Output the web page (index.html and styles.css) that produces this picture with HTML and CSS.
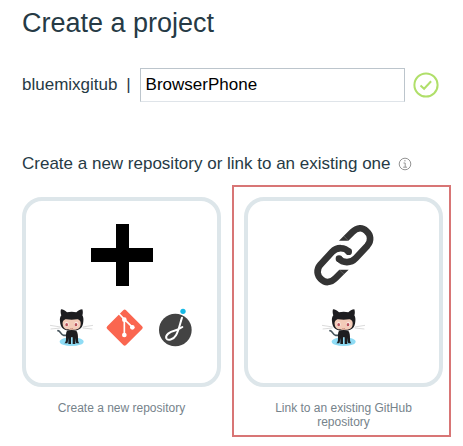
FILE: index.html
```html
<!DOCTYPE html>
<html lang="en">
<head>
  <meta charset="utf-8">
  <title>Create a project</title>
  <link rel="stylesheet" href="styles.css">
</head>
<body>
  <svg class="symbols" aria-hidden="true">
    <symbol id="octocat" viewBox="18 24 132 120">
      <ellipse cx="83" cy="125" rx="36" ry="13" fill="#8fdcf5"/>
      <path d="M18 76l32 5M20 87l30-3M116 81l31-5M116 84l29 3" fill="none" stroke="#c9c9c9" stroke-width="2"/>
      <path d="M42 92c8 0 8 13 17 14h14" fill="none" stroke="#46545c" stroke-width="5" stroke-linecap="round"/>
      <path d="M69 92h28c5 7 5 14 5 24 0 8 1 10 4 14h-9c-2-4-2-10-3-16v18h-8v-20h-5v20h-8v-18c-1 6-1 12-3 16h-9c4-4 5-8 5-14 0-10-1-17 3-24z" fill="#1d1d20"/>
      <path d="M51 28c7 0 14 5 18 9 9-2 19-2 28 0 4-4 11-9 18-9 2 6 2 13 0 18 3 5 4 11 3 18-1 20-11 29-35 29S49 84 48 64c-1-7 0-13 4-18-2-5-3-12-1-18z" fill="#1d1d20"/>
      <path d="M67 58c10 2 22 2 32 0 8 0 12 7 11 15-1 13-10 17-27 17s-26-4-27-17c-1-8 3-15 11-15z" fill="#f3cbb8"/>
      <ellipse cx="68" cy="73" rx="6" ry="8" fill="#fbe9e2"/>
      <ellipse cx="97" cy="73" rx="6" ry="8" fill="#fbe9e2"/>
      <ellipse cx="68" cy="74" rx="4" ry="5" fill="#b9535d"/>
      <ellipse cx="96" cy="74" rx="4" ry="5" fill="#b9535d"/>
      <path d="M79 86q4 2 8 0" fill="none" stroke="#a85f50" stroke-width="2"/>
    </symbol>
  </svg>

  <main class="page">
    <h1>Create a project</h1>

    <form class="name-row">
      <label for="project-name">bluemixgitub <span class="divider">|</span></label>
      <input type="text" id="project-name" value="BrowserPhone">
      <svg class="valid-icon" viewBox="0 0 26 26" role="img" aria-label="Valid name">
        <circle cx="13" cy="13" r="11.6"/>
        <path d="M7.5 13.5l3.6 3.3 7-7.5"/>
      </svg>
    </form>

    <h2>Create a new repository or link to an existing one
      <svg class="info-icon" viewBox="0 0 14 14" role="img" aria-label="More information">
        <circle cx="7" cy="7" r="5.8"/>
        <path d="M5.5 6h1.7v4M5.2 10.2h3.8M6.2 3.8h1.4"/>
      </svg>
    </h2>

    <div class="options">
      <button type="button" class="option">
        <span class="card">
          <svg class="main-icon" viewBox="0 0 62 62" aria-hidden="true">
            <path d="M25 0h13v24h24v14H38v24H25V38H0V24h25z" fill="#000"/>
          </svg>
          <span class="logos">
            <svg class="logo" viewBox="18 24 132 120" aria-hidden="true"><use href="#octocat" x="18" y="24" width="132" height="120"/></svg>
            <svg class="logo" viewBox="12 24 132 120" aria-hidden="true">
              <rect x="34" y="43" width="80" height="80" rx="6" transform="rotate(45 74 83)" fill="#fa6650"/>
              <path d="M55 39l18 19v46M73 58l25 24" fill="none" stroke="#fff" stroke-width="5"/>
              <circle cx="73" cy="59" r="7" fill="#fff"/>
              <circle cx="97" cy="82" r="7" fill="#fff"/>
              <circle cx="73" cy="105" r="7" fill="#fff"/>
            </svg>
            <svg class="logo logo-narrow" viewBox="177 24 105 120" aria-hidden="true">
              <circle cx="229" cy="90" r="49" fill="#434343"/>
              <path d="M249 53c-6 18-9 37-18 53-8 14-25 17-29 9-4-10 11-20 24-23 9-2 17-6 24-11" fill="none" stroke="#fff" stroke-width="6" stroke-linecap="round"/>
              <circle cx="252" cy="34" r="10" fill="#fff"/>
              <circle cx="252" cy="34" r="8" fill="#16b9e5"/>
            </svg>
          </span>
        </span>
        <span class="caption">Create a new repository</span>
      </button>

      <button type="button" class="option selected">
        <span class="card">
          <svg class="main-icon" viewBox="39 30 186 186" aria-hidden="true">
            <g fill="none" stroke="#343434" stroke-width="20">
              <path d="M138 73L156 55C172 39 188 40 199 51C212 62 215 80 202 95L167 133C152 149 128 147 117 134"/>
              <path d="M125 174L107 192C91 208 75 207 64 196C51 185 48 167 61 152L96 114C111 98 135 100 146 113"/>
            </g>
            <g fill="#343434">
              <circle cx="117" cy="134" r="10"/>
              <circle cx="146" cy="113" r="10"/>
              <path d="M117 80h28l-14-14zM118 167h28l-14 14z"/>
            </g>
          </svg>
          <span class="logos">
            <svg class="logo" viewBox="18 24 132 120" aria-hidden="true"><use href="#octocat" x="18" y="24" width="132" height="120"/></svg>
          </span>
        </span>
        <span class="caption">Link to an existing GitHub repository</span>
      </button>
    </div>
  </main>
</body>
</html>
```

FILE: styles.css
```css
* {
  box-sizing: border-box;
}

body {
  margin: 0;
  background-color: white;
  color: #263a45;
  font-family: "Liberation Sans", Arial, sans-serif;
  font-size: 17px;
}

.symbols {
  display: none;
}

.page {
  padding: 6px 12px 9px 22px;
}

h1 {
  margin: 0 0 28px;
  font-size: 27px;
  font-weight: normal;
  line-height: 34px;
}

.name-row {
  display: flex;
  align-items: center;
  margin-right: 12px;
}

.name-row label {
  margin-right: 9px;
}

.divider {
  margin-left: 4px;
}

.name-row input {
  flex: 1;
  min-width: 0;
  height: 34px;
  padding: 0 5px;
  border: 1px solid #bcc5cc;
  border-bottom-color: #dfe4e9;
  color: #000;
  font: inherit;
}

.valid-icon {
  width: 26px;
  height: 26px;
  margin-left: 8px;
  fill: none;
  stroke: #b0df6a;
  stroke-width: 2;
}

h2 {
  display: flex;
  align-items: center;
  gap: 7px;
  margin: 52px 0 11px;
  font-size: 17px;
  font-weight: normal;
  line-height: 20px;
}

.info-icon {
  width: 14px;
  height: 14px;
  fill: none;
  stroke: #949494;
  stroke-width: 1;
}

.options {
  display: grid;
  grid-template-columns: 1fr 1fr;
  gap: 3px;
  margin-left: -12px;
}

.option {
  display: flex;
  flex-direction: column;
  justify-content: flex-start;
  align-items: stretch;
  padding: 10px 6px 6px 10px;
  border: 2px solid transparent;
  background: none;
  color: #76838b;
  font-family: inherit;
  font-size: 12px;
  line-height: 14px;
  cursor: pointer;
}

.option.selected {
  border-color: #d87575;
}

.card {
  display: flex;
  flex-direction: column;
  align-items: center;
  gap: 22px;
  padding: 23px 0 35px;
  border: 4px solid #dde6ea;
  border-radius: 20px;
}

.main-icon {
  width: 62px;
  height: 62px;
}

.logos {
  display: flex;
  gap: 10px;
}

.logo {
  width: 44px;
  height: 40px;
}

.logo-narrow {
  width: 35px;
}

.caption {
  padding: 14px 24px 0;
}
```
